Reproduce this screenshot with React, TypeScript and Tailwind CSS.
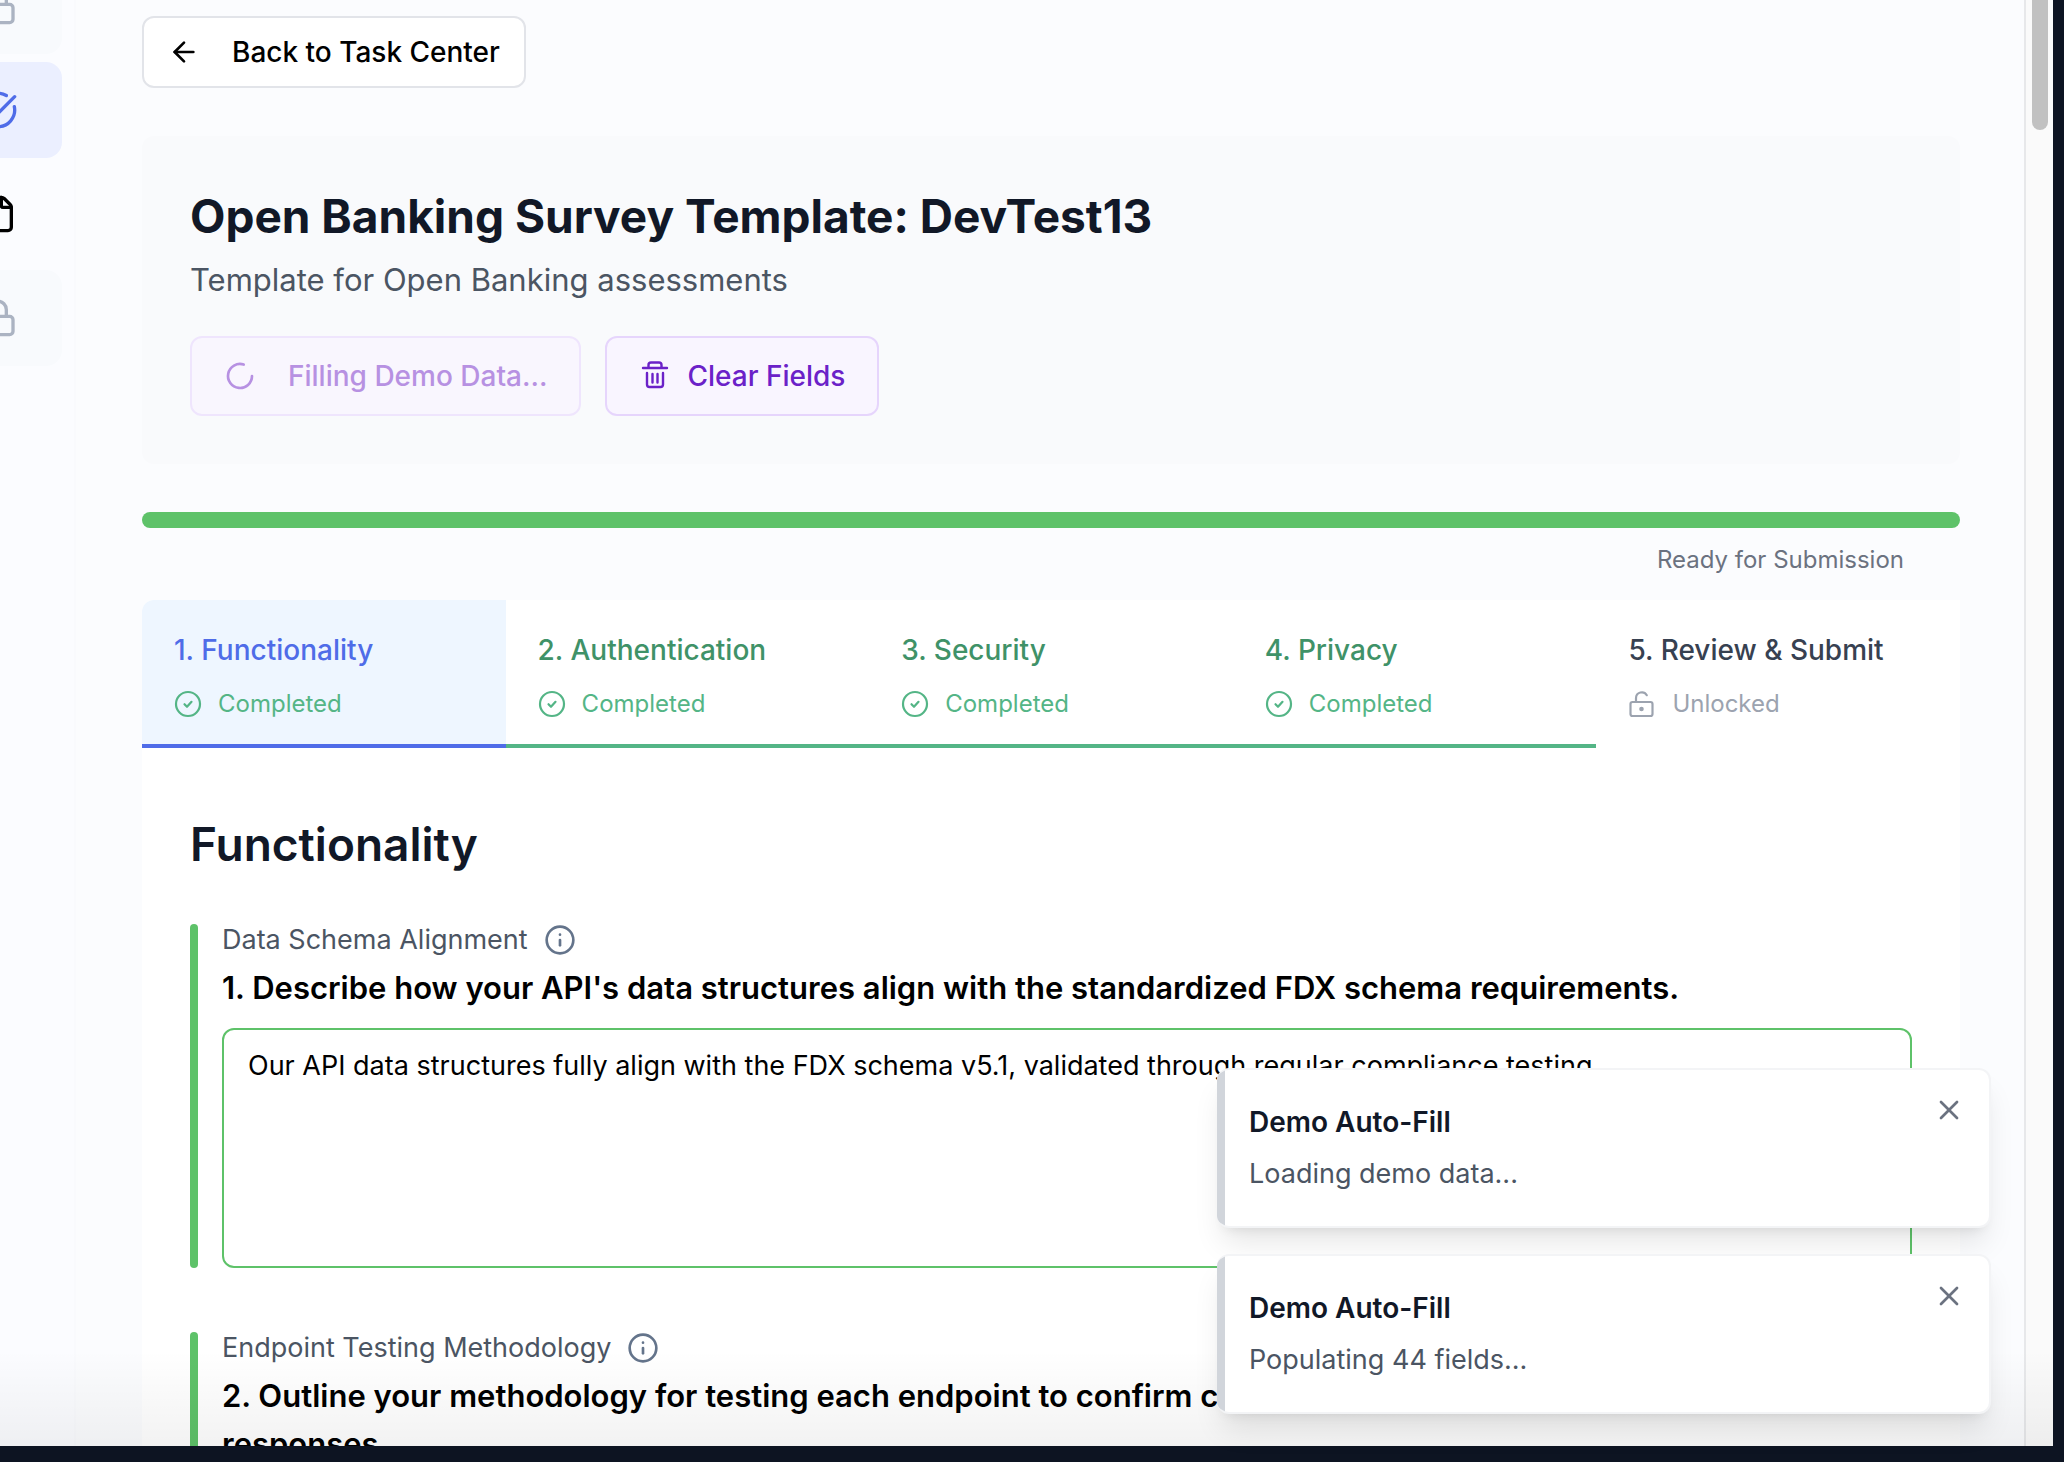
import React from "react";
import { ArrowLeft, CircleCheckBig, File, Info, Loader2, Lock, X } from "lucide-react";

const steps = [
  { title: "1. Functionality", state: "active" },
  { title: "2. Authentication", state: "done" },
  { title: "3. Security", state: "done" },
  { title: "4. Privacy", state: "done" },
  { title: "5. Review & Submit", state: "open" },
];

const tabStyles: Record<string, string> = {
  active: "border-[#4f6ce8] bg-[#eef6ff] text-[#4f6ce8]",
  done: "border-[#54b586] text-[#3f9268]",
  open: "border-transparent text-[#374151]",
};

function CheckBadge() {
  return (
    <svg viewBox="0 0 28 28" className="size-7" fill="none" stroke="currentColor" strokeWidth="2.2" strokeLinecap="round" strokeLinejoin="round" aria-hidden="true">
      <circle cx="14" cy="14" r="12" />
      <path d="M10.500 14.200l2.500 2.600 4.500-5" />
    </svg>
  );
}

function UnlockedBadge() {
  return (
    <svg viewBox="0 0 28 28" className="size-7" fill="none" stroke="currentColor" strokeWidth="2.2" strokeLinecap="round" strokeLinejoin="round" aria-hidden="true">
      <rect x="2.500" y="12" width="22" height="14" rx="2" />
      <path d="M8 12V8a5.800 5.800 0 0 1 10.800-2.800" />
      <circle cx="13.500" cy="19" r="2.300" fill="currentColor" stroke="none" />
    </svg>
  );
}

function TrashIcon() {
  return (
    <svg viewBox="0 0 32 32" className="size-8" fill="none" stroke="currentColor" strokeWidth="2.400" strokeLinecap="round" strokeLinejoin="round" aria-hidden="true">
      <path d="M4 8h24" />
      <path d="M9.500 7.500V5a2.500 2.500 0 0 1 2.500-2.500h8a2.500 2.500 0 0 1 2.500 2.500v2.500" />
      <path d="M8 13v11.500a2.500 2.500 0 0 0 2.500 2.500h11a2.500 2.500 0 0 0 2.500-2.500V13" />
      <path d="M13.500 14v8.500M18.500 14v8.500" />
    </svg>
  );
}

function Question({ id, topic, text, value }: { id: string; topic: string; text: string; value: string }) {
  return (
    <div className="flex gap-6">
      <div className="w-2 shrink-0 rounded-full bg-[#5ec269]" />
      <div className="min-w-0 flex-1">
        <div className="flex h-8 items-center gap-4">
          <span className="text-[27px] leading-8 text-[#4b5563]">{topic}</span>
          <button type="button" aria-label={`About ${topic}`} className="text-[#64748b]">
            <Info className="size-8" strokeWidth={2} />
          </button>
        </div>
        <label htmlFor={id} className="mt-2 block text-[31px] leading-12 font-semibold text-black">{text}</label>
        <textarea
          id={id}
          defaultValue={value}
          className="mt-4 block h-60 w-full resize-y rounded-xl border-2 border-[#5ec269] bg-white px-6 py-4 text-[27px] leading-10 text-black outline-none"
        />
      </div>
    </div>
  );
}

function Toast({ title, text }: { title: string; text: string }) {
  return (
    <div role="status" className="flex overflow-hidden rounded-xl border-2 border-l-0 border-[#f3f4f6] bg-white shadow-[0_20px_30px_-6px_rgba(0,0,0,0.1),0_8px_12px_-8px_rgba(0,0,0,0.1)]">
      <div className="w-2 bg-[#d1d5db]" />
      <div className="flex-1 px-6 py-8">
        <p className="text-[28px] leading-10 font-semibold text-[#111827]">{title}</p>
        <p className="mt-3 text-[27px] leading-10 text-[#4b5563]">{text}</p>
      </div>
      <button type="button" aria-label="Dismiss" className="mt-6 mr-6 size-8 text-[#6b7280]">
        <X className="size-8" strokeWidth={2} />
      </button>
    </div>
  );
}

function Sidebar() {
  return (
    <nav className="flex w-[76px] shrink-0 justify-end overflow-hidden border-r-2 border-[#f9fafd] bg-[#fbfcff] pr-3">
      <div className="-mt-[42px] flex w-32 shrink-0 flex-col gap-2">
        <button type="button" aria-label="Locked section" className="flex h-24 items-center justify-center rounded-2xl bg-[#f8fafd] text-[#abb3c2]">
          <Lock className="size-10" />
        </button>
        <a href="#tasks" aria-label="Task Center" className="flex h-24 items-center justify-center rounded-2xl bg-[#ebefff] text-[#4f6ce8]">
          <CircleCheckBig className="size-10" />
        </a>
        <a href="#files" aria-label="Files" className="flex h-24 items-center justify-center rounded-2xl text-black">
          <File className="size-10" />
        </a>
        <button type="button" aria-label="Locked section" className="flex h-24 items-center justify-center rounded-2xl bg-[#f8fafd] text-[#abb3c2]">
          <Lock className="size-10" />
        </button>
      </div>
    </nav>
  );
}

export default function App() {
  return (
    <div className="relative flex h-screen overflow-hidden bg-[#0d1422] pr-[11px] pb-4 font-['Inter',sans-serif]">
      <div className="relative flex min-w-0 flex-1 overflow-hidden bg-[#fbfcfe]">
        <Sidebar />
        <main className="min-w-0 flex-1 overflow-hidden pt-4 pr-16 pl-[66px]">
          <button type="button" className="flex h-18 items-center gap-8 rounded-xl border-2 border-[#e2e4e9] bg-white px-6 text-[28px] font-medium text-black">
            <ArrowLeft className="size-8" strokeWidth={2} />
            Back to Task Center
          </button>

          <section className="mt-12 rounded-xl bg-[#f9fafc] p-12">
            <h1 className="text-[46px] leading-16 font-bold text-[#111827]">Open Banking Survey Template: DevTest13</h1>
            <p className="mt-2 text-[31px] leading-12 text-[#4b5563]">Template for Open Banking assessments</p>
            <div className="mt-8 flex gap-6">
              <button type="button" disabled className="flex h-20 items-center gap-8 rounded-xl border-2 border-[#efe5fd] bg-[#f9f6fe] px-8 text-[28px] font-medium text-[#b791e2]">
                <Loader2 className="size-8" strokeWidth={2} />
                Filling Demo Data...
              </button>
              <button type="button" className="flex h-20 items-center gap-4 rounded-xl border-2 border-[#e6d5fc] bg-[#f9f5ff] px-8 text-[28px] font-medium text-[#6b21c8]">
                <TrashIcon />
                Clear Fields
              </button>
            </div>
          </section>

          <div role="progressbar" aria-label="Completion" aria-valuenow={100} className="mt-12 h-4 rounded-full bg-[#5ec269]" />
          <p className="mt-4 pr-14 text-right text-[24px] leading-8 text-[#6b7280]">Ready for Submission</p>

          <section className="mt-6 overflow-hidden rounded-tl-xl bg-white">
            <div role="tablist" className="grid grid-cols-5">
              {steps.map((s) => (
                <button key={s.title} type="button" role="tab" aria-selected={s.state === "active"} className={`border-b-4 px-8 pt-7 pb-6 text-left ${tabStyles[s.state]}`}>
                  <span className="block text-[28px] leading-11 font-medium">{s.title}</span>
                  <span className={`mt-4 flex h-8 items-center gap-4 text-[24px] leading-8 ${s.state === "open" ? "text-[#9ca3af]" : "text-[#54b586]"}`}>
                    {s.state === "open" ? <UnlockedBadge /> : <CheckBadge />}
                    {s.state === "open" ? "Unlocked" : "Completed"}
                  </span>
                </button>
              ))}
            </div>
            <div className="px-12 pt-16">
              <h2 className="text-[46px] leading-16 font-semibold text-[#111827]">Functionality</h2>
              <div className="mt-12 flex flex-col gap-16">
                <Question
                  id="q1"
                  topic="Data Schema Alignment"
                  text="1. Describe how your API's data structures align with the standardized FDX schema requirements."
                  value="Our API data structures fully align with the FDX schema v5.1, validated through regular compliance testing."
                />
                <Question
                  id="q2"
                  topic="Endpoint Testing Methodology"
                  text="2. Outline your methodology for testing each endpoint to confirm compliance with expected inputs and responses."
                  value=""
                />
              </div>
            </div>
          </section>
        </main>
        <div className="flex w-[29px] shrink-0 justify-center border-l-2 border-[#e7e8ea] bg-[#fafafa]" aria-hidden="true">
          <div className="h-[130px] w-4 rounded-b-full bg-[#c1c1c1]" />
        </div>
        <div className="pointer-events-none absolute inset-x-0 bottom-0 h-24 bg-linear-to-t from-black/5 to-transparent" aria-hidden="true" />
      </div>

      <div className="absolute right-[73px] bottom-12 flex w-[774px] flex-col gap-[26px]">
        <Toast title="Demo Auto-Fill" text="Loading demo data..." />
        <Toast title="Demo Auto-Fill" text="Populating 44 fields..." />
      </div>
    </div>
  );
}
